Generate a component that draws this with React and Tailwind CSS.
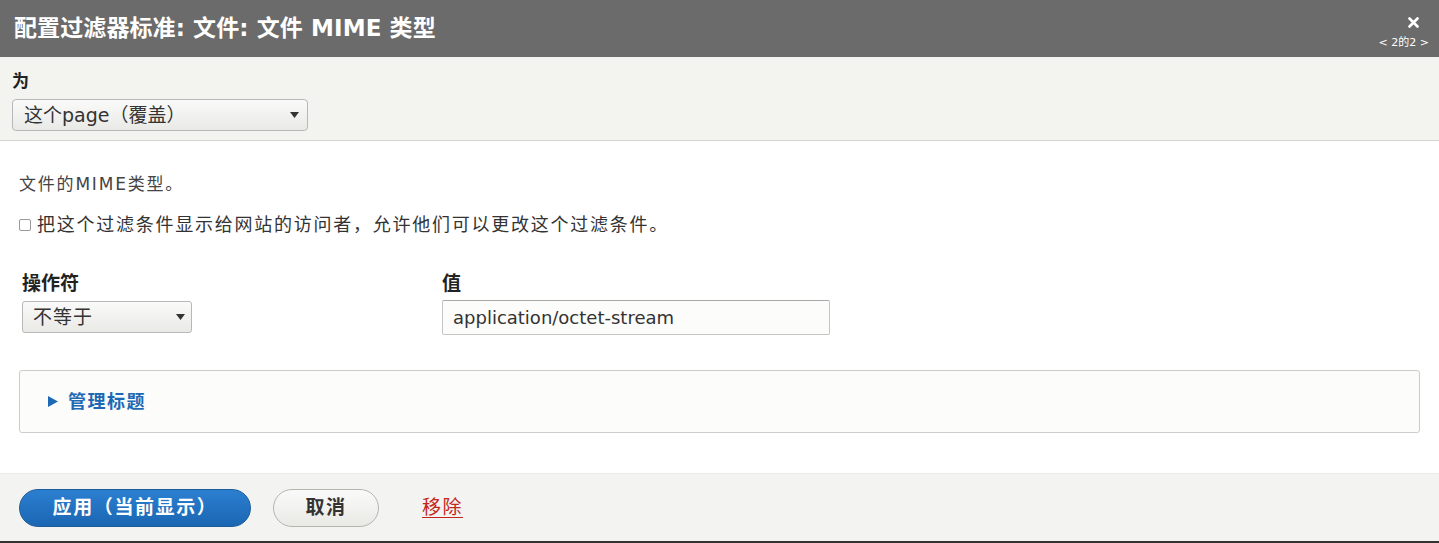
import React from "react";

const FONT = { fontFamily: '"DejaVu Sans", "Noto Sans CJK SC", sans-serif' };

function Caret() {
  return (
    <svg width="9" height="6" viewBox="0 0 9 6" className="shrink-0">
      <path d="M0 0 H9 L4.5 6 Z" fill="#333" />
    </svg>
  );
}

export default function App() {
  return (
    <div className="w-[1439px] h-[543px] overflow-hidden bg-white flex flex-col text-[#333]" style={FONT}>
      {/* Header */}
      <div className="h-[57px] shrink-0 bg-[#6b6b6b] flex items-center justify-between pl-[14px] pr-[10px]">
        <h1 className="text-white font-bold text-[23px] tracking-[0.1px] leading-none">配置过滤器标准: 文件: 文件 MIME 类型</h1>
        <div className="flex flex-col items-end gap-[9px] pt-[8px]">
          <svg width="11" height="11" viewBox="0 0 11 11" className="mr-[10px]">
            <path d="M1.5 1.5 L9.5 9.5 M9.5 1.5 L1.5 9.5" stroke="#fff" strokeWidth="2.6" strokeLinecap="round" />
          </svg>
          <div className="text-white text-[11px] leading-none whitespace-nowrap">&lt; 2的2 &gt;</div>
        </div>
      </div>

      {/* Override section */}
      <div className="h-[84px] shrink-0 bg-[#f3f3f0] border-b border-[#d4d4d0] pl-[12px] pt-[13px]">
        <div className="text-[17px] font-bold leading-[22px] text-[#222]">为</div>
        <div className="mt-[7px] w-[296px] h-[32px] rounded-[4px] border border-[#b8b8b8] bg-gradient-to-b from-[#fafafa] to-[#e9e9e6] flex items-center justify-between pl-[11px] pr-[8px]">
          <span className="text-[19px] leading-none text-[#333]">这个page（覆盖）</span>
          <Caret />
        </div>
      </div>

      {/* Body */}
      <div className="flex-1 bg-white px-[19px] pt-[33px]">
        <div className="text-[17px] leading-[20px] tracking-[1.8px] text-[#444]">文件的MIME类型。</div>
        <label className="mt-[21px] flex items-center gap-[6px]">
          <span className="w-[12px] h-[12px] border border-[#999] rounded-[2px] bg-white shrink-0" />
          <span className="text-[18px] leading-[20px] tracking-[1.75px] text-[#333]">把这个过滤条件显示给网站的访问者，允许他们可以更改这个过滤条件。</span>
        </label>

        <div className="mt-[37px] flex pl-[3px]">
          <div className="w-[420px]">
            <div className="text-[19px] font-bold leading-[22px] text-[#222]">操作符</div>
            <div className="mt-[7px] w-[170px] h-[32px] rounded-[3px] border border-[#b8b8b8] bg-gradient-to-b from-[#fafafa] to-[#e9e9e6] flex items-center justify-between pl-[10px] pr-[6px]">
              <span className="text-[19px] leading-none tracking-[1px] text-[#333]">不等于</span>
              <Caret />
            </div>
          </div>
          <div>
            <div className="text-[19px] font-bold leading-[22px] text-[#222]">值</div>
            <div className="mt-[6px] w-[388px] h-[35px] border border-[#c4c4c4] border-t-[#a8a8a8] rounded-[2px] bg-[#fcfcfa] flex items-center pl-[10px]">
              <span className="text-[18px] leading-none text-[#333]">application/octet-stream</span>
            </div>
          </div>
        </div>

        <div className="mt-[35px] h-[63px] rounded-[3px] border border-[#cccccc] bg-[#fcfcfa] flex items-center pl-[28px] gap-[10px]">
          <svg width="10" height="11" viewBox="0 0 10 11">
            <path d="M0 0 L10 5.5 L0 11 Z" fill="#1d69b5" />
          </svg>
          <span className="text-[18px] font-bold tracking-[1.5px] text-[#1d69b5]">管理标题</span>
        </div>
      </div>

      {/* Footer */}
      <div className="h-[68px] shrink-0 bg-[#f3f3f1] border-t border-[#ebebe8] flex items-center pl-[19px] gap-[22px]">
        <button className="w-[232px] h-[38px] rounded-full bg-gradient-to-b from-[#2c7fd0] to-[#1a66b3] border border-[#1e5c9c] text-white text-[19px] font-bold tracking-[1.6px]">应用（当前显示）</button>
        <button className="w-[106px] h-[38px] rounded-full bg-gradient-to-b from-[#fafafa] to-[#e9e9e5] border border-[#b5b5b0] text-[#333] text-[19px] font-bold tracking-[1.5px]">取消</button>
        <a className="ml-[21px] text-[19px] tracking-[1.5px] text-[#c4261b] underline underline-offset-[3px]">移除</a>
      </div>
      <div className="h-[2px] shrink-0 bg-[#333]" />
    </div>
  );
}
